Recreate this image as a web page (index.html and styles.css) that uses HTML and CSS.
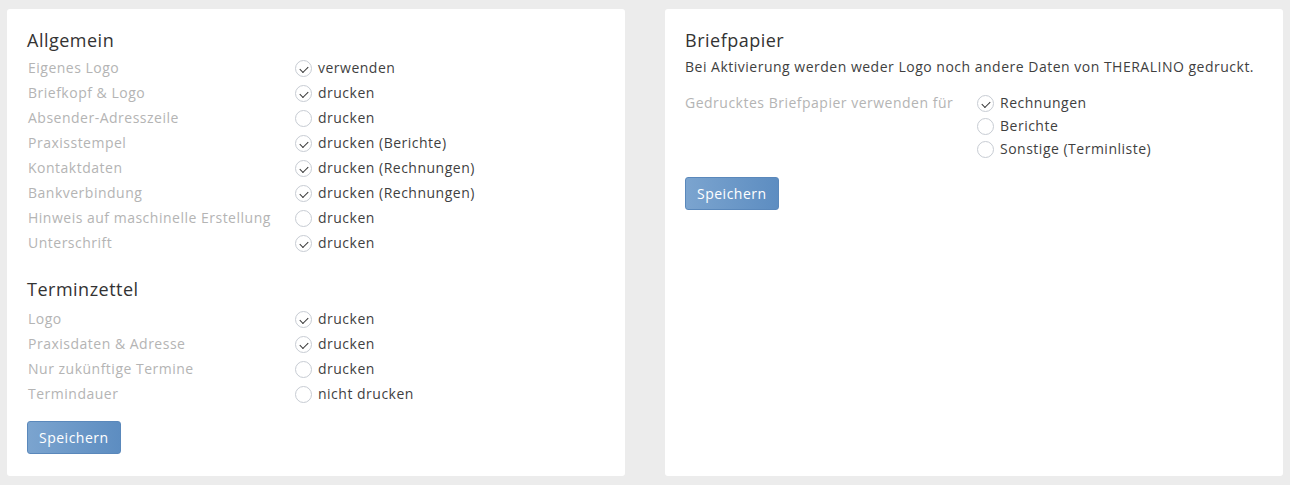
FILE: index.html
```html
<!DOCTYPE html>
<html lang="de">
<head>
<meta charset="utf-8">
<link rel="stylesheet" href="styles.css">
</head>
<body>
<div class="page">
  <section class="card">
    <h2 class="title">Allgemein</h2>
    <div class="rows">
      <div class="row"><span class="label">Eigenes Logo</span><span class="opt"><span class="cb on"></span>verwenden</span></div>
      <div class="row"><span class="label">Briefkopf &amp; Logo</span><span class="opt"><span class="cb on"></span>drucken</span></div>
      <div class="row"><span class="label">Absender-Adresszeile</span><span class="opt"><span class="cb"></span>drucken</span></div>
      <div class="row"><span class="label">Praxisstempel</span><span class="opt"><span class="cb on"></span>drucken (Berichte)</span></div>
      <div class="row"><span class="label">Kontaktdaten</span><span class="opt"><span class="cb on"></span>drucken (Rechnungen)</span></div>
      <div class="row"><span class="label">Bankverbindung</span><span class="opt"><span class="cb on"></span>drucken (Rechnungen)</span></div>
      <div class="row"><span class="label">Hinweis auf maschinelle Erstellung</span><span class="opt"><span class="cb"></span>drucken</span></div>
      <div class="row"><span class="label">Unterschrift</span><span class="opt"><span class="cb on"></span>drucken</span></div>
    </div>
    <h2 class="title second">Terminzettel</h2>
    <div class="rows rows-second">
      <div class="row"><span class="label">Logo</span><span class="opt"><span class="cb on"></span>drucken</span></div>
      <div class="row"><span class="label">Praxisdaten &amp; Adresse</span><span class="opt"><span class="cb on"></span>drucken</span></div>
      <div class="row"><span class="label">Nur zukünftige Termine</span><span class="opt"><span class="cb"></span>drucken</span></div>
      <div class="row"><span class="label">Termindauer</span><span class="opt"><span class="cb"></span>nicht drucken</span></div>
    </div>
    <button class="btn btn-left">Speichern</button>
  </section>
  <section class="card">
    <h2 class="title">Briefpapier</h2>
    <p class="desc">Bei Aktivierung werden weder Logo noch andere Daten von THERALINO gedruckt.</p>
    <div class="group">
      <span class="label wide">Gedrucktes Briefpapier verwenden für</span>
      <div class="opts">
        <span class="opt tight"><span class="cb on"></span>Rechnungen</span>
        <span class="opt tight"><span class="cb"></span>Berichte</span>
        <span class="opt tight"><span class="cb"></span>Sonstige (Terminliste)</span>
      </div>
    </div>
    <button class="btn btn-right">Speichern</button>
  </section>
</div>
</body>
</html>
```
FILE: styles.css
```css
* { box-sizing: border-box; }
html, body { margin: 0; padding: 0; }
body {
  background: #ececec;
  font-family: "Open Sans", "DejaVu Sans", sans-serif;
  font-size: 14px;
  letter-spacing: 0.5px;
  color: #3f3f3f;
}
.page {
  display: grid;
  grid-template-columns: 618px 618px;
  column-gap: 40px;
  padding: 9px 7px;
  height: 485px;
}
.card {
  background: #fff;
  border-radius: 3px;
  padding: 20px 20px 0 20px;
  display: flex;
  flex-direction: column;
  align-items: flex-start;
}
.title {
  margin: 0;
  font-size: 18px;
  line-height: 22px;
  font-weight: 400;
  letter-spacing: 0.5px;
  color: #333;
}
.title.second { margin-top: 23px; }
.rows {
  margin-top: 4px;
  display: flex;
  flex-direction: column;
  width: 100%;
}
.rows.rows-second { margin-top: 6px; }
.row {
  display: flex;
  align-items: center;
  height: 25px;
  padding-left: 1px;
}
.label {
  color: #b4b4b4;
  width: 267px;
  flex: none;
}
.label.wide { width: 292px; line-height: 23px; }
.opt {
  display: flex;
  align-items: center;
  white-space: nowrap;
}
.cb {
  width: 17px;
  height: 17px;
  border: 1px solid #c7ccd3;
  border-radius: 50%;
  margin-right: 6px;
  flex: none;
  position: relative;
  top: 1px;
}
.cb.on::after {
  content: "";
  position: absolute;
  left: 4px;
  top: 4.5px;
  width: 7px;
  height: 4px;
  border-left: 1.6px solid #333;
  border-bottom: 1.6px solid #333;
  transform: rotate(-45deg);
}
.desc {
  margin: 5px 0 0 0;
  line-height: 22px;
}
.group {
  display: flex;
  margin-top: 13px;
}
.opts {
  display: flex;
  flex-direction: column;
}
.opt.tight { height: 23px; }
.btn {
  font-family: inherit;
  font-size: 14px;
  letter-spacing: 0.5px;
  color: #fff;
  background: linear-gradient(to right, #7ba4cf, #5d8dc1);
  border: 1px solid #5a88bb;
  border-radius: 3px;
  height: 33px;
  padding: 0 11px;
  cursor: pointer;
}
.btn-left { margin-top: 15px; }
.btn-right { margin-top: 17px; }
```
